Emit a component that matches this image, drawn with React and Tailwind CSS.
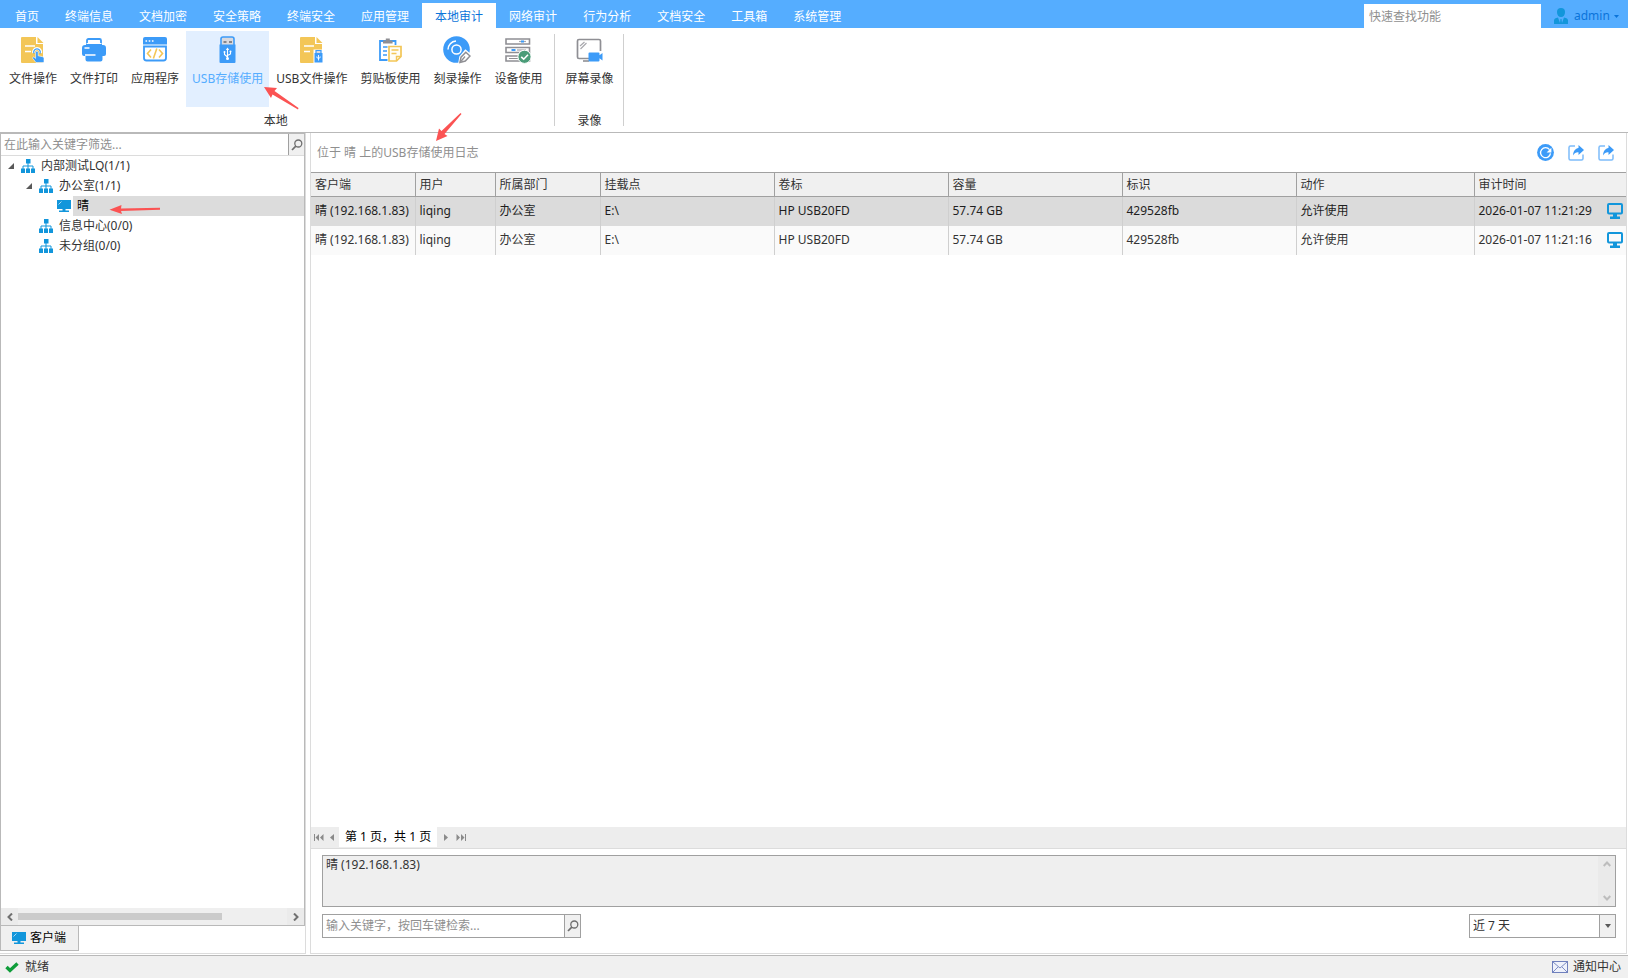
import React, { useState } from 'react';

const menuTabs = [
  '首页', '终端信息', '文档加密', '安全策略', '终端安全', '应用管理',
  '本地审计', '网络审计', '行为分析', '文档安全', '工具箱', '系统管理',
];

const FileShape = () => (
  <>
    <path d="M2 1h14v7h7v18a1 1 0 0 1-1 1H2a1 1 0 0 1-1-1V2a1 1 0 0 1 1-1z" fill="#f3c657" />
    <path d="M17.500 1l6 6h-6z" fill="#f3c657" />
    <path d="M5 10h10M5 15.500h6" stroke="#fff" strokeWidth="1.300" />
  </>
);

const FileTouchIcon = () => (
  <svg width="26" height="28" viewBox="0 0 26 28">
    <FileShape />
    <path d="M13.600 17a3.600 3.600 0 1 1 7 0" fill="none" stroke="#fff" strokeWidth="3" />
    <path d="M16 26.500l-3.200-4c-.7-1.200.9-2 1.800-1l1 .9v-6c0-1.700 2.600-1.700 2.600 0v3.400l4.300.9c1 .2 1.500.9 1.500 1.800v4z" fill="#3c9bf8" stroke="#fff" strokeWidth=".6" />
    <path d="M14 17.500a3.300 3.300 0 1 1 6 0" fill="none" stroke="#3c9bf8" strokeWidth="1.200" />
  </svg>
);

const PrinterIcon = () => (
  <svg width="26" height="28" viewBox="0 0 26 28">
    <path d="M6 10V4.500Q6 3 7.500 3h11Q20 3 20 4.500V10" fill="none" stroke="#3c9bf8" strokeWidth="1.800" />
    <path d="M5 7h16v2h1a3 3 0 0 1 3 3v6a2 2 0 0 1-2 2h-1.500v3.500a2 2 0 0 1-2 2h-13a2 2 0 0 1-2-2V20H3a2 2 0 0 1-2-2v-6a3 3 0 0 1 3-3h1z" fill="#3c9bf8" />
    <path d="M5.500 7.500h15" stroke="#fff" strokeWidth="1" />
    <path d="M3.500 12h5M4 19h10.500" stroke="#fff" strokeWidth="1.500" />
  </svg>
);

const AppCodeIcon = () => (
  <svg width="26" height="28" viewBox="0 0 26 28">
    <path d="M1 3a2 2 0 0 1 2-2h20a2 2 0 0 1 2 2v5.500H1z" fill="#3c9bf8" />
    <path d="M3.500 5h1.600M6.700 5h1.600M9.900 5h1.600" stroke="#fff" strokeWidth="1.600" />
    <path d="M2 10.500h22V22a2.500 2.500 0 0 1-2.500 2.500h-17A2.500 2.500 0 0 1 2 22z" fill="#fff" stroke="#3c9bf8" strokeWidth="1.800" />
    <path d="M9 13.500L5.500 17.500 9 21.500M17 13.500l3.500 4L17 21.500M14.800 12.500l-3.400 10" fill="none" stroke="#f3c657" strokeWidth="1.600" />
  </svg>
);

const UsbIcon = () => (
  <svg width="26" height="28" viewBox="0 0 26 28">
    <path d="M6 9V3Q6 1 8 1h9q2 0 2 2v6" fill="#d9d9de" stroke="#3c9bf8" strokeWidth="1.600" />
    <path d="M8.500 5h3v2h-3zM14 5h3v2h-3z" fill="#85858a" />
    <path d="M4.500 8.500h16V26q0 1-1 1h-14q-1 0-1-1z" fill="#3c9bf8" />
    <path d="M12.500 12.500v10M12.500 21l-3-2.500v-2.500M12.500 19.500l3-1.500v-2.500" fill="none" stroke="#fff" strokeWidth="1.100" />
    <path d="M10.800 14l1.700-2.500 1.700 2.500z" fill="#fff" />
    <circle cx="12.500" cy="22.500" r="1.500" fill="#fff" />
    <circle cx="9.500" cy="16" r="1" fill="#fff" />
    <circle cx="15.500" cy="15.500" r="1" fill="#fff" />
  </svg>
);

const UsbFileIcon = () => (
  <svg width="26" height="28" viewBox="0 0 26 28">
    <FileShape />
    <path d="M14.500 13.500h10V27h-10z" fill="#fff" />
    <path d="M17 17v-2.500h5V17" fill="#d9d9de" stroke="#3c9bf8" strokeWidth="1.200" />
    <path d="M15.500 17h8v9.500h-8z" fill="#3c9bf8" />
    <path d="M19.500 19v5.500M17.800 20.500v1l1.700 1 1.700-1v-1" fill="none" stroke="#fff" strokeWidth=".9" />
  </svg>
);

const ClipboardIcon = () => (
  <svg width="26" height="28" viewBox="0 0 26 28">
    <path d="M3 5h15.500v19H3z" fill="#fff" stroke="#3c9bf8" strokeWidth="1.800" />
    <path d="M6 11h9M6 15h4M6 19h4" stroke="#3c9bf8" strokeWidth="1.400" />
    <path d="M6 4.500h2.800V2.500h4V4.500h2.800v3H6z" fill="#8f8f94" />
    <path d="M12 10.500h12v10L19.500 25H12z" fill="#fff" stroke="#fff" strokeWidth="3" />
    <path d="M12 10.500h12v10L19.500 25H12z" fill="#fffdf6" stroke="#f3c657" strokeWidth="1.700" />
    <path d="M14.500 14h7M14.500 17.500h5M19.500 25v-4.500H24" fill="none" stroke="#f3c657" strokeWidth="1.400" />
  </svg>
);

const DiscIcon = () => (
  <svg width="28" height="28" viewBox="0 0 28 28">
    <circle cx="13.500" cy="13.500" r="13.300" fill="#3c9bf8" />
    <circle cx="13.500" cy="13.500" r="4.600" fill="none" stroke="#fff" strokeWidth="1.500" />
    <path d="M5 13.500A8.500 8.500 0 0 1 13 5" fill="none" stroke="#fff" strokeWidth="1.500" />
    <path d="M16.500 27l1-6 5-6 5.500 4.500-5.500 6z" fill="#fff" stroke="#fff" strokeWidth="2.500" />
    <path d="M17 26.500l1-5.300 4.800-5 4.200 3.800-4.700 5z" fill="#fff" stroke="#8f8f94" strokeWidth="1.500" />
    <path d="M22 20.500l-5 6" stroke="#8f8f94" strokeWidth="1.300" />
  </svg>
);

const DeviceIcon = () => (
  <svg width="26" height="28" viewBox="0 0 26 28">
    <g fill="#fff" stroke="#8f8f94" strokeWidth="1.600">
      <path d="M1 3h23.500v5H1zM1 11.500h23.500v5H1zM1 20h23.500v5H1z" />
    </g>
    <path d="M14 5.500h7" stroke="#a8a8ad" strokeWidth="1.200" />
    <path d="M16 5.500h3M6.500 14h4" stroke="#3c9bf8" strokeWidth="1.800" />
    <path d="M12 14h9M4 22.500h9" stroke="#8f8f94" strokeWidth="1.200" />
    <circle cx="19.500" cy="20.800" r="6.600" fill="#4a9c78" stroke="#fff" strokeWidth="1" />
    <path d="M16.200 20.800l2.500 2.400 4.300-4.400" fill="none" stroke="#fff" strokeWidth="1.600" />
  </svg>
);

const ScreenRecordIcon = () => (
  <svg width="28" height="28" viewBox="0 0 28 28">
    <path d="M25.500 15V5q0-1.500-1.500-1.500H4Q2.500 3.500 2.500 5v16q0 1.500 1.500 1.500h10" fill="none" stroke="#8f8f94" strokeWidth="1.700" />
    <path d="M8 25h6" stroke="#8f8f94" strokeWidth="1.600" />
    <path d="M5 10l4.500-4M5.500 13l6-6" stroke="#a8a8ad" strokeWidth="1.200" />
    <path d="M14.500 16.500h9q1 0 1 1v1.800l3-2.300v7.500l-3-2.200v2.200q0 1-1 1h-9q-1 0-1-1v-7q0-1 1-1z" fill="#3c9bf8" />
  </svg>
);

const SitemapIcon = () => (
  <svg width="14" height="14" viewBox="0 0 14 14" className="shrink-0">
    <path d="M5 0h4.500v4.500H5zM0 9.500h4V14H0zM5 9.500h4V14H5zM10 9.500h4V14h-4z" fill="#1296db" />
    <path d="M7 4v6M2 10V7h10v3" fill="none" stroke="#1296db" />
  </svg>
);

const ClientIcon = () => (
  <svg width="14" height="12" viewBox="0 0 14 12" className="shrink-0">
    <path d="M0 0h14v9H0zM5.500 9h3v1.500H5.500zM2 10.500h10V12H2z" fill="#1296db" />
    <path d="M1.500 4.500l3-3" stroke="#a5daf5" />
  </svg>
);

const MonitorIcon = () => (
  <svg width="16" height="16" viewBox="0 0 16 16" className="shrink-0">
    <rect x="1" y="1" width="14" height="9.500" rx="1" fill="none" stroke="#1296db" strokeWidth="2" />
    <path d="M6 11h4v2.500h3V16H3v-2.500h3z" fill="#1296db" />
  </svg>
);

const SearchIcon = () => (
  <svg width="12" height="12" viewBox="0 0 12 12">
    <circle cx="7.300" cy="4.500" r="3.500" fill="none" stroke="#6e6e6e" strokeWidth="1.300" />
    <path d="M4.800 7.200L1 11" stroke="#6e6e6e" strokeWidth="1.700" />
  </svg>
);

const RefreshIcon = () => (
  <svg width="17" height="17" viewBox="0 0 18 18">
    <circle cx="9" cy="9" r="8.900" fill="#3c9bf8" />
    <path d="M13.300 6A5.300 5.300 0 1 0 14.300 10" fill="none" stroke="#fff" strokeWidth="1.400" />
    <path d="M15.200 4v5h-5z" fill="#fff" />
  </svg>
);

const ShareIcon = () => (
  <svg width="16" height="16" viewBox="0 0 16 16">
    <path d="M7 1H2.500Q1 1 1 2.500v11Q1 15 2.500 15h11q1.500 0 1.500-1.500V9.500" fill="none" stroke="#7dbcfa" strokeWidth="1.500" />
    <path d="M10.500 0L16 5l-5.500 5V7.200C8 7 6.500 8 5 10.500c.3-4.500 2.300-7 5.500-7.500z" fill="#3c9bf8" />
  </svg>
);

const localTools = [
  { label: '文件操作', Icon: FileTouchIcon },
  { label: '文件打印', Icon: PrinterIcon },
  { label: '应用程序', Icon: AppCodeIcon },
  { label: 'USB存储使用', Icon: UsbIcon },
  { label: 'USB文件操作', Icon: UsbFileIcon },
  { label: '剪贴板使用', Icon: ClipboardIcon },
  { label: '刻录操作', Icon: DiscIcon },
  { label: '设备使用', Icon: DeviceIcon },
];

const recordTools = [{ label: '屏幕录像', Icon: ScreenRecordIcon }];

const treeNodes = [
  { label: '内部测试LQ(1/1)', indent: 'pl-[7px]', open: true },
  { label: '办公室(1/1)', indent: 'pl-[25px]', open: true },
  { label: '晴', indent: 'pl-[43px]', client: true },
  { label: '信息中心(0/0)', indent: 'pl-[25px]' },
  { label: '未分组(0/0)', indent: 'pl-[25px]' },
];

const columns = [
  { title: '客户端', width: 'w-[104px]' },
  { title: '用户', width: 'w-[80px]' },
  { title: '所属部门', width: 'w-[105px]' },
  { title: '挂载点', width: 'w-[174px]' },
  { title: '卷标', width: 'w-[174px]' },
  { title: '容量', width: 'w-[174px]' },
  { title: '标识', width: 'w-[174px]' },
  { title: '动作', width: 'w-[178px]' },
  { title: '审计时间', width: '' },
];

const logs = [
  ['晴 (192.168.1.83)', 'liqing', '办公室', 'E:\\', 'HP USB20FD', '57.74 GB', '429528fb', '允许使用', '2026-01-07 11:21:29'],
  ['晴 (192.168.1.83)', 'liqing', '办公室', 'E:\\', 'HP USB20FD', '57.74 GB', '429528fb', '允许使用', '2026-01-07 11:21:16'],
];

const ToolGroup = ({ title, tools, active, onSelect }) => (
  <div className="flex flex-col">
    <div className="flex gap-px">
      {tools.map(({ label, Icon }) => (
        <button
          key={label}
          onClick={() => onSelect(label)}
          className={`flex h-[76px] flex-col items-center gap-[7px] whitespace-nowrap px-1.5 pt-[5px] ${
            active === label ? 'bg-[#e2efff] text-[#55adff]' : 'text-[#333]'
          }`}
        >
          <Icon />
          <span>{label}</span>
        </button>
      ))}
    </div>
    <div className="mt-1.5 text-center">{title}</div>
  </div>
);

const Header = () => {
  const [tab, setTab] = useState('本地审计');

  return (
    <header className="flex h-7 shrink-0 items-end bg-[#55adff]">
      <nav className="flex h-full items-end pl-0.5">
        {menuTabs.map((name) => (
          <button
            key={name}
            onClick={() => setTab(name)}
            className={`h-[25px] whitespace-nowrap px-[13px] pt-0.5 ${
              name === tab ? 'bg-white text-[#0b74da]' : 'text-white'
            }`}
          >
            {name}
          </button>
        ))}
      </nav>
      <input
        aria-label="快速查找功能"
        placeholder="快速查找功能"
        className="ml-auto h-6 w-[177px] bg-white px-[5px] outline-none placeholder:text-[#8f8f8f]"
      />
      <button className="flex h-6 w-[87px] items-center pl-[13px] text-[#0b74da]">
        <svg width="14" height="16" viewBox="0 0 14 16">
          <path d="M3 4a4 4 0 0 1 8 0c0 3-1.500 5-4 5S3 7 3 4z" fill="#1296db" />
          <path d="M0 16v-3.500Q0 10 4 9.500L6 15l.5-4h1l.5 4 2-5.500q4 .5 4 3V16z" fill="#1296db" />
        </svg>
        <span className="ml-1.5">admin</span>
        <svg width="5" height="3" viewBox="0 0 5 3" className="ml-1">
          <path d="M0 0h5L2.500 3z" fill="#0b74da" />
        </svg>
      </button>
    </header>
  );
};

const Sidebar = () => (
  <aside className="flex w-[306px] shrink-0 flex-col border-b border-r border-[#dcdcdc]">
    <div className="flex min-h-0 flex-1 flex-col border border-[#b9b9b9]">
      <div className="flex h-[22px] shrink-0 border-b border-[#dcdcdc]">
        <input
          aria-label="筛选"
          placeholder="在此输入关键字筛选..."
          className="min-w-0 flex-1 px-[3px] outline-none placeholder:text-[#8f8f8f]"
        />
        <button aria-label="搜索" className="flex w-4 items-center justify-center border-l border-[#a0a0a0] bg-[#f0f0f0]">
          <SearchIcon />
        </button>
      </div>
      <ul className="flex-1">
        {treeNodes.map((node) => (
          <li key={node.label} className={`flex h-5 items-center ${node.indent}`}>
            <span className="w-[13px] shrink-0">
              {node.open && (
                <svg width="6" height="6" viewBox="0 0 6 6">
                  <path d="M6 0v6H0z" fill="#595959" />
                </svg>
              )}
            </span>
            {node.client ? <ClientIcon /> : <SitemapIcon />}
            <span className={`ml-0.5 flex h-5 flex-1 items-center pl-1 ${node.client ? 'bg-[#dcdcdc] text-black' : ''}`}>
              {node.label}
            </span>
          </li>
        ))}
      </ul>
      <div className="flex h-[17px] shrink-0 items-center bg-[#ebebeb]">
        <button aria-label="向左滚动" className="flex w-[17px] justify-center">
          <svg width="6" height="8" viewBox="0 0 6 8">
            <path d="M5 .5L1.500 4 5 7.500" fill="none" stroke="#707070" strokeWidth="2" />
          </svg>
        </button>
        <div className="h-full flex-1 bg-[#efefef] py-[5px]">
          <div className="h-[7px] w-[76%] bg-[#cbcbcb]" />
        </div>
        <button aria-label="向右滚动" className="flex w-[17px] justify-center">
          <svg width="6" height="8" viewBox="0 0 6 8">
            <path d="M1 .5L4.500 4 1 7.500" fill="none" stroke="#707070" strokeWidth="2" />
          </svg>
        </button>
      </div>
    </div>
    <div className="mb-[2px] flex shrink-0">
      <button className="flex h-[25px] w-[79px] items-center gap-1 border-b border-x border-[#b9b9b9] bg-[#f0f0f0] pl-[11px] text-black">
        <ClientIcon />
        客户端
      </button>
    </div>
  </aside>
);

const LogTable = () => (
  <table className="w-full table-fixed border-collapse text-left">
    <thead>
      <tr className="h-6 border-y border-[#a0a0a0] bg-[#f0f0f0]">
        {columns.map((col, i) => (
          <th
            key={col.title}
            className={`${col.width} px-1 font-normal ${i < columns.length - 1 ? 'border-r border-[#a0a0a0]' : ''}`}
          >
            {col.title}
          </th>
        ))}
      </tr>
    </thead>
    <tbody>
      {logs.map((row, r) => (
        <tr key={row[8]} className={`h-[29px] ${r === 0 ? 'bg-[#dbdbdb] text-[#1e1e1e]' : 'bg-[#fafafa]'}`}>
          {row.map((cell, i) => (
            <td
              key={columns[i].title}
              className={`whitespace-nowrap pl-1 pr-[3px] ${i < row.length - 1 ? 'border-r border-[#cfcfcf]' : ''}`}
            >
              {i === row.length - 1 ? (
                <div className="flex items-center justify-between">
                  {cell}
                  <MonitorIcon />
                </div>
              ) : (
                cell
              )}
            </td>
          ))}
        </tr>
      ))}
    </tbody>
  </table>
);

const Pager = () => (
  <div className="flex h-[22px] shrink-0 items-center border-b border-[#dcdcdc] bg-[#ededed] pl-[3px]">
    <button aria-label="首页">
      <svg width="10" height="7" viewBox="0 0 10 7">
        <path d="M0 0h1v7H0zM5 0v7L1.500 3.500zM9.500 0v7L6 3.500z" fill="#8a8a8a" />
      </svg>
    </button>
    <button aria-label="上一页" className="ml-1.5 mr-[5px]">
      <svg width="4" height="7" viewBox="0 0 4 7">
        <path d="M4 0v7L0 3.500z" fill="#8a8a8a" />
      </svg>
    </button>
    <span className="flex h-5 items-center self-start whitespace-nowrap bg-white px-1.5 text-black">第 1 页，共 1 页</span>
    <button aria-label="下一页" className="ml-[7px] mr-2">
      <svg width="4" height="7" viewBox="0 0 4 7">
        <path d="M0 0v7l4-3.500z" fill="#8a8a8a" />
      </svg>
    </button>
    <button aria-label="末页">
      <svg width="10" height="7" viewBox="0 0 10 7">
        <path d="M9 0h1v7H9zM.5 0v7L4 3.500zM5 0v7l3.500-3.500z" fill="#8a8a8a" />
      </svg>
    </button>
  </div>
);

const AuditPanel = () => (
  <main className="mr-px flex min-w-0 flex-1 flex-col border-x border-b border-[#dcdcdc]">
    <div className="flex h-[39px] shrink-0 items-center pl-1.5 pr-3">
      <h1 className="text-[#8f8f8f]">位于 晴 上的USB存储使用日志</h1>
      <div className="ml-auto flex items-center gap-3.5">
        <button aria-label="刷新"><RefreshIcon /></button>
        <button aria-label="导出"><ShareIcon /></button>
        <button aria-label="导出全部"><ShareIcon /></button>
      </div>
    </div>
    <div className="min-h-0 flex-1">
      <LogTable />
    </div>
    <Pager />
    <div className="flex shrink-0 flex-col gap-[7px] pb-[15px] pl-[11px] pr-2.5 pt-1.5">
      <div className="flex h-[52px] border border-[#a0a0a0] bg-[#efefef]">
        <textarea
          aria-label="详细信息"
          readOnly
          value="晴 (192.168.1.83)"
          className="min-w-0 flex-1 resize-none overflow-hidden px-[3px] pt-px outline-none"
        />
        <div className="flex w-[17px] flex-col items-center justify-between bg-[#eaeaea] py-[5px]">
          <svg width="8" height="6" viewBox="0 0 8 6">
            <path d="M.7 5L4 1.500 7.300 5" fill="none" stroke="#bdbdbd" strokeWidth="2" />
          </svg>
          <svg width="8" height="6" viewBox="0 0 8 6">
            <path d="M.7 1L4 4.500 7.300 1" fill="none" stroke="#bdbdbd" strokeWidth="2" />
          </svg>
        </div>
      </div>
      <div className="flex items-center justify-between">
        <div className="flex h-6 w-[259px] border border-[#a0a0a0]">
          <input
            aria-label="检索"
            placeholder="输入关键字，按回车键检索..."
            className="min-w-0 flex-1 px-[3px] outline-none placeholder:text-[#8f8f8f]"
          />
          <button aria-label="检索" className="flex w-4 items-center justify-center border-l border-[#a0a0a0] bg-[#f0f0f0]">
            <SearchIcon />
          </button>
        </div>
        <div className="relative h-6 w-[147px] border border-[#a0a0a0]">
          <select aria-label="时间范围" defaultValue="7" className="h-full w-full appearance-none px-[3px] outline-none">
            <option value="1">今天</option>
            <option value="7">近 7 天</option>
            <option value="30">近 30 天</option>
          </select>
          <span className="pointer-events-none absolute inset-y-0 right-0 flex w-4 items-center justify-center border-l border-[#a0a0a0] bg-[#f0f0f0]">
            <svg width="6" height="4" viewBox="0 0 6 4">
              <path d="M0 0h6L3 4z" fill="#595959" />
            </svg>
          </span>
        </div>
      </div>
    </div>
  </main>
);

const StatusBar = () => (
  <footer className="mt-px flex h-[23px] shrink-0 items-center border-t border-[#b9b9b9] bg-[#f0f0f0] px-[5px]">
    <svg width="14" height="11" viewBox="0 0 14 11">
      <path d="M1.500 5L5 8.500 12.500 1.500" fill="none" stroke="#0f9d3a" strokeWidth="3.400" />
    </svg>
    <span className="ml-1.5">就绪</span>
    <button className="ml-auto flex items-center gap-[5px] pr-0.5">
      <svg width="16" height="12" viewBox="0 0 16 12">
        <rect x=".5" y=".5" width="15" height="11" fill="#eef1fb" stroke="#6f80bd" />
        <path d="M1 1l7 6 7-6M1 11l5-5M15 11l-5-5" fill="none" stroke="#6f80bd" strokeWidth=".9" />
      </svg>
      通知中心
    </button>
  </footer>
);

// Red hint arrows laid over the page
const HintArrows = () => (
  <svg width="480" height="220" viewBox="0 0 480 220" className="pointer-events-none absolute left-0 top-0">
    <g fill="#fb5353">
      <path d="M264 87l13 1-2.500 3L298.500 108l-.5 1.500L272.500 94.500l-1.500 3.500z" />
      <path d="M436 141l3-12.500 2.500 2.500L460.500 113l1 1L444.500 134l3 2z" />
      <path d="M109.500 209.700l12-4.700-.5 3.500 39-.8v2l-39 1.300 1 3z" />
    </g>
  </svg>
);

const App = () => {
  const [tool, setTool] = useState('USB存储使用');

  return (
    <div className="relative flex h-screen flex-col overflow-hidden bg-white font-['Noto_Sans','Noto_Sans_CJK_SC',sans-serif] text-xs text-[#333]">
      <Header />

      {/* Ribbon */}
      <div className="flex h-[105px] shrink-0 border-b border-[#b9b9b9] pl-[3px] pt-[3px]">
        <ToolGroup title="本地" tools={localTools} active={tool} onSelect={setTool} />
        <div className="ml-1.5 mr-1 mt-[3px] h-[92px] w-px bg-[#cfcfcf]" />
        <ToolGroup title="录像" tools={recordTools} active={tool} onSelect={setTool} />
        <div className="ml-1 mt-[3px] h-[92px] w-px bg-[#cfcfcf]" />
      </div>

      <div className="flex min-h-0 flex-1 gap-1">
        <Sidebar />
        <AuditPanel />
      </div>

      <StatusBar />
      <HintArrows />
    </div>
  );
};

export default App;
